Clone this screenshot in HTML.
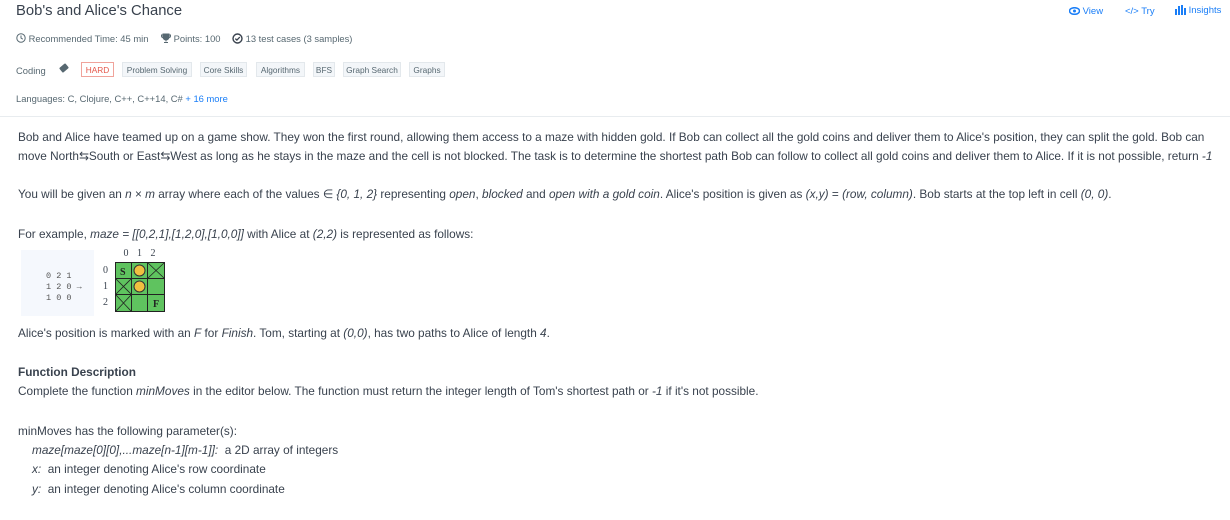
<!DOCTYPE html>
<html><head><style>
body{margin:0;width:1230px;height:520px;overflow:hidden;background:#fff;font-family:"Liberation Sans",sans-serif;color:#39424e;position:relative}
.a{position:absolute;white-space:nowrap}
.t{font-size:14.8px;color:#39424e}
.m{font-size:9.4px;color:#576871}
.tag{position:absolute;top:62px;height:15px;line-height:14px;font-size:8.3px;color:#576871;background:#f3f6f9;border:1px solid #e3e8ec;box-sizing:border-box;white-space:nowrap;text-align:center;overflow:hidden}
.p{font-size:11.8px;color:#39424e}
i{font-style:italic}
.lnk{color:#1a7ef7;font-size:9.5px}
</style></head><body>
<div class="a t" style="left:16px;top:3px">Bob's and Alice's Chance</div>
<div class="a lnk" style="left:1069px;top:6px"><svg width="11" height="8" viewBox="0 0 11 8" style="vertical-align:middle"><ellipse cx="5.5" cy="4" rx="5" ry="3.3" fill="none" stroke="#1a7ef7" stroke-width="1.5"/><circle cx="5.5" cy="4" r="1.5" fill="#1a7ef7"/></svg> View</div>
<div class="a lnk" style="left:1125px;top:6px">&lt;/&gt; Try</div>
<div class="a lnk" style="left:1175px;top:5px"><svg width="11" height="10" style="vertical-align:middle"><rect x="0" y="4" width="2" height="6" fill="#1a7ef7"/><rect x="3" y="1" width="2" height="9" fill="#1a7ef7"/><rect x="6" y="0" width="2" height="10" fill="#1a7ef7"/><rect x="9" y="3" width="2" height="7" fill="#1a7ef7"/></svg> Insights</div>
<div class="a m" style="left:16px;top:33px"><svg width="10" height="10" style="vertical-align:-1px"><circle cx="5" cy="5" r="4.2" fill="none" stroke="#576871" stroke-width="1"/><path d="M5 2.5V5l1.8 1.2" fill="none" stroke="#576871"/></svg> Recommended Time: 45 min</div>
<div class="a m" style="left:161px;top:33px"><svg width="10" height="10" style="vertical-align:-1px"><path d="M2 1h6v3a3 3 0 0 1-6 0z M5 7v1.5 M3 9.5h4" fill="#576871" stroke="#576871"/><path d="M2 2H0.5v1a1.5 1.5 0 0 0 1.5 1.5M8 2h1.5v1A1.5 1.5 0 0 1 8 4.5" fill="none" stroke="#576871"/></svg> Points: 100</div>
<div class="a m" style="left:232px;top:33px"><svg width="11" height="11" style="vertical-align:-2px"><circle cx="5.5" cy="5.5" r="4.5" fill="none" stroke="#39424e" stroke-width="1.4"/><path d="M3.3 5.6l1.6 1.5 2.9-3" fill="none" stroke="#39424e" stroke-width="1.3"/></svg> 13 test cases (3 samples)</div>
<div class="a m" style="left:16px;top:65px">Coding</div>
<div class="a" style="left:60px;top:65px;width:8px;height:6px;background:#576871;transform:rotate(-40deg);border-radius:1px"></div>
<div class="tag" style="left:81px;width:33px;color:#e4574a;background:#fff;border-color:#f0a39b">HARD</div>
<div class="tag" style="left:122px;width:70px">Problem Solving</div>
<div class="tag" style="left:200px;width:47px">Core Skills</div>
<div class="tag" style="left:256px;width:49px">Algorithms</div>
<div class="tag" style="left:313px;width:22px">BFS</div>
<div class="tag" style="left:343px;width:58px">Graph Search</div>
<div class="tag" style="left:409px;width:36px">Graphs</div>
<div class="a m" style="left:16px;top:93px">Languages: C, Clojure, C++, C++14, C# <span style="color:#1a7ef7">+ 16 more</span></div>
<div class="a" style="left:0;top:116px;width:1230px;height:1px;background:#e8ecef"></div>
<div class="a p" style="left:18px;top:130px">Bob and Alice have teamed up on a game show. They won the first round, allowing them access to a maze with hidden gold. If Bob can collect all the gold coins and deliver them to Alice's position, they can split the gold. Bob can</div>
<div class="a p" style="left:18px;top:149px">move North⇆South or East⇆West as long as he stays in the maze and the cell is not blocked. The task is to determine the shortest path Bob can follow to collect all gold coins and deliver them to Alice. If it is not possible, return <i>-1</i></div>
<div class="a p" style="left:18px;top:187px">You will be given an <i>n</i> × <i>m</i> array where each of the values ∈ <i>{0, 1, 2}</i> representing <i>open</i>, <i>blocked</i> and <i>open with a gold coin</i>. Alice's position is given as <i>(x,y)</i> = <i>(row, column)</i>. Bob starts at the top left in cell <i>(0, 0)</i>.</div>
<div class="a p" style="left:18px;top:227px">For example, <i>maze = [[0,2,1],[1,2,0],[1,0,0]]</i> with Alice at <i>(2,2)</i> is represented as follows:</div>
<div class="a" style="left:21px;top:250px;width:73px;height:66px;background:#f5f8fd"></div>
<div class="a" style="left:46px;top:271px;font-family:'Liberation Mono',monospace;font-size:8.5px;line-height:11px;color:#555">0 2 1<br>1 2 0 →<br>1 0 0</div>
<div class="a" style="left:115px;top:248px;font-family:'Liberation Serif',serif;font-size:10px;word-spacing:6px">&nbsp;0 1 2</div>
<div class="a" style="left:103px;top:263px;font-family:'Liberation Serif',serif;font-size:10px;line-height:16px">0<br>1<br>2</div>
<div class="a" style="left:115px;top:262px;width:50px;height:50px;background:#222"></div>
<svg class="a" style="left:115px;top:262px" width="50" height="50">
<g fill="#5fc35f"><rect x="1" y="1" width="15" height="15"/><rect x="17" y="1" width="15" height="15"/><rect x="33" y="1" width="16" height="15"/><rect x="1" y="17" width="15" height="15"/><rect x="17" y="17" width="15" height="15"/><rect x="33" y="17" width="16" height="15"/><rect x="1" y="33" width="15" height="16"/><rect x="17" y="33" width="15" height="16"/><rect x="33" y="33" width="16" height="16"/></g>
<g stroke="#222" stroke-width="0.8"><path d="M33 1L49 16M49 1L33 16M1 17L16 32M16 17L1 32M1 33L16 49M16 33L1 49"/></g>
<circle cx="24.5" cy="8.5" r="5.5" fill="#f0c040" stroke="#333"/><circle cx="24.5" cy="24.5" r="5.5" fill="#f0c040" stroke="#333"/>
<text x="5" y="13" font-family="Liberation Serif" font-weight="bold" font-size="10" fill="#222">S</text>
<text x="38" y="45" font-family="Liberation Serif" font-weight="bold" font-size="10" fill="#222">F</text>
</svg>
<div class="a p" style="left:18px;top:326px">Alice's position is marked with an <i>F</i> for <i>Finish</i>. Tom, starting at <i>(0,0)</i>, has two paths to Alice of length <i>4</i>.</div>
<div class="a p" style="left:18px;top:365px;font-weight:bold">Function Description</div>
<div class="a p" style="left:18px;top:384px">Complete the function <i>minMoves</i> in the editor below. The function must return the integer length of Tom's shortest path or <i>-1</i> if it's not possible.</div>
<div class="a p" style="left:18px;top:424px">minMoves has the following parameter(s):</div>
<div class="a p" style="left:32px;top:443px"><i>maze[maze[0][0],...maze[n-1][m-1]]:</i>&nbsp; a 2D array of integers</div>
<div class="a p" style="left:32px;top:462px"><i>x:</i>&nbsp; an integer denoting Alice's row coordinate</div>
<div class="a p" style="left:32px;top:482px"><i>y:</i>&nbsp; an integer denoting Alice's column coordinate</div>
</body></html>
